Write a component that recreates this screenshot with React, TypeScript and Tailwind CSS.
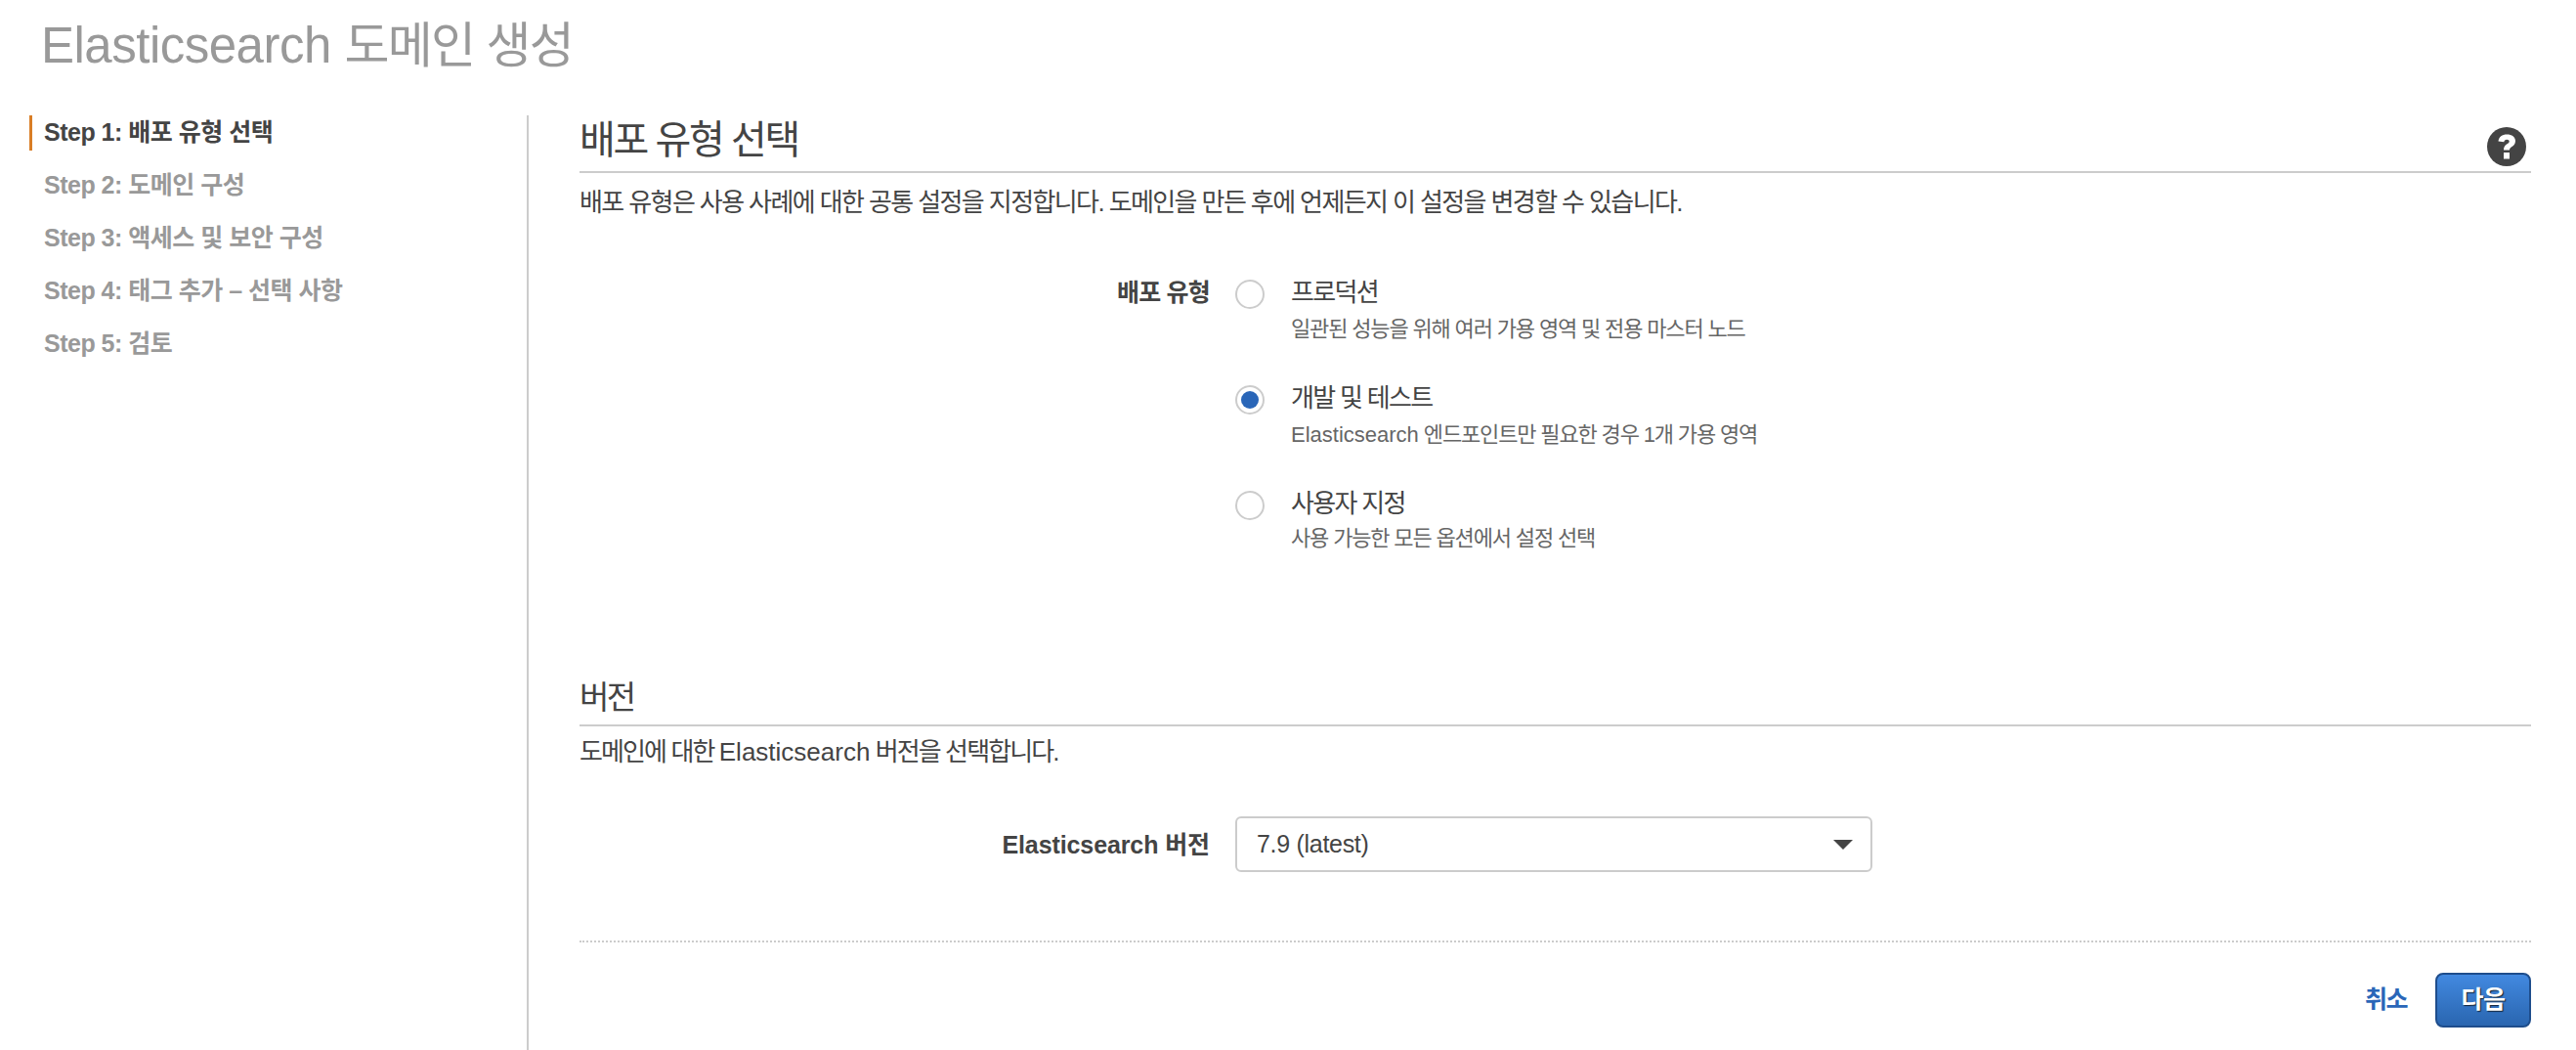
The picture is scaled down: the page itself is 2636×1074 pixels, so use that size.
const font = '[font-family:"Liberation_Sans","Noto_Sans_CJK_KR",sans-serif]'

const steps = ['Step 1: 배포 유형 선택', 'Step 2: 도메인 구성', 'Step 3: 액세스 및 보안 구성', 'Step 4: 태그 추가 – 선택 사항', 'Step 5: 검토']

const options = [
  { title: '프로덕션', sub: <>일관된 성능을 위해 여러 가용 영역 및 전용 마스터 노드</>, checked: false, rowGap: 'mb-[39px]', subGap: 'mt-[7px]' },
  { title: '개발 및 테스트', sub: <><span className="tracking-normal">Elasticsearch</span> 엔드포인트만 필요한 경우 1개 가용 영역</>, checked: true, rowGap: 'mb-[39px]', subGap: 'mt-[7px]' },
  { title: '사용자 지정', sub: <>사용 가능한 모든 옵션에서 설정 선택</>, checked: false, rowGap: '', subGap: 'mt-[5px]' },
]

function Radio({ checked }: { checked: boolean }) {
  return (
    <div className="mt-[3px] flex h-[30px] w-[30px] shrink-0 items-center justify-center rounded-full border-2 border-[#ccc] bg-white">
      {checked && <div className="h-[18px] w-[18px] rounded-full bg-[#2a66b8]" />}
    </div>
  )
}

export default function App() {
  return (
    <div className={`h-[1074px] w-[2636px] overflow-hidden bg-white ${font}`}>
      <h1 className="pl-[42px] pt-[17px] text-[51px] leading-[60px] tracking-[-0.5px] text-[#999]">
        Elasticsearch <span className="text-[50px] tracking-[-1.7px]">도메인 생성</span>
      </h1>

      <div className="mt-[41px] flex">
        <div className="w-[539px] pl-[30px]">
          {steps.map((step, i) => (
            <div
              key={step}
              className={`mb-[18px] h-[36px] border-l-[3px] pl-[12px] text-[25px] leading-[34px] font-bold tracking-[-0.5px] ${i === 0 ? 'border-[#d97e26] text-[#444]' : 'border-transparent text-[#999]'}`}
            >
              {step}
            </div>
          ))}
        </div>

        <div className="h-[956px] flex-1 border-l-2 border-[#ccc] pl-[52px]">
          <div className="w-[1997px]">
            <div className="relative h-[59px] border-b-2 border-[#ccc]">
              <h2 className="text-[40px] leading-[50px] tracking-[-2.4px] text-[#444]">배포 유형 선택</h2>
              <svg className="absolute right-[5px] top-[12px]" width="40" height="40" viewBox="0 0 40 40">
                <circle cx="20" cy="20" r="20" fill="#444" />
                <path d="M11.500 14.500c.5-4.500 4-7 8.800-7 5 0 8.700 2.700 8.700 6.800 0 3.200-1.900 4.700-3.900 6-1.500 1-2.100 1.700-2.100 3.200h-6c0-3.400 1.300-4.900 3.500-6.300 1.300-.9 2.200-1.400 2.200-2.500 0-1.200-1-1.900-2.500-1.900-1.700 0-2.700 1-2.900 2.500z" fill="#fff" />
                <rect x="17" y="26" width="6" height="6.500" fill="#fff" />
              </svg>
            </div>
            <p className="mt-[14px] text-[26px] leading-[32px] tracking-[-1.6px] text-[#444]">배포 유형은 사용 사례에 대한 공통 설정을 지정합니다. 도메인을 만든 후에 언제든지 이 설정을 변경할 수 있습니다.</p>

            <div className="mt-[60px] flex">
              <div className="w-[645px] text-right text-[25px] leading-[32px] font-bold tracking-[-0.8px] text-[#444]">배포 유형</div>
              <div className="ml-[26px]">
                {options.map(o => (
                  <div key={o.title} className={`flex ${o.rowGap}`}>
                    <Radio checked={o.checked} />
                    <div className="ml-[27px]">
                      <div className="text-[26px] leading-[32px] tracking-[-1.7px] text-[#444]">{o.title}</div>
                      <div className={`${o.subGap} text-[22px] leading-[30px] tracking-[-1.15px] text-[#666]`}>{o.sub}</div>
                    </div>
                  </div>
                ))}
              </div>
            </div>

            <div className="mt-[129px] h-[48px] border-b-2 border-[#ccc]">
              <h2 className="text-[33px] leading-[38px] tracking-[-2.5px] text-[#444]">버전</h2>
            </div>
            <p className="mt-[10px] text-[26px] leading-[32px] tracking-[-1.9px] text-[#444]">
              도메인에 대한 <span className="tracking-normal">Elasticsearch</span> 버전을 선택합니다.
            </p>

            <div className="mt-[50px] flex items-center">
              <div className="w-[645px] text-right text-[25px] leading-[32px] font-bold tracking-[-0.1px] text-[#444]">Elasticsearch 버전</div>
              <div className="ml-[26px] flex h-[57px] w-[652px] items-center justify-between rounded-[6px] border-2 border-[#ccc] pl-[20px] pr-[18px] text-[25px] tracking-[-0.3px] text-[#444]">
                <span>7.9 (latest)</span>
                <div className="h-0 w-0 border-x-[10px] border-t-[10px] border-x-transparent border-t-[#444]" />
              </div>
            </div>

            <div className="mt-[70px] border-t-2 border-dotted border-[#ccc]" />

            <div className="mt-[31px] flex items-center justify-end">
              <span className="text-[25px] font-bold tracking-[-1.5px] text-[#2a66b8]">취소</span>
              <button className="ml-[29px] h-[56px] w-[98px] rounded-[8px] border-2 border-[#1e4d8c] bg-gradient-to-b from-[#4289e0] to-[#2a66b0] text-[25px] font-bold tracking-[-0.5px] text-white [text-shadow:1px_1px_1px_#123]">다음</button>
            </div>
          </div>
        </div>
      </div>
    </div>
  )
}
